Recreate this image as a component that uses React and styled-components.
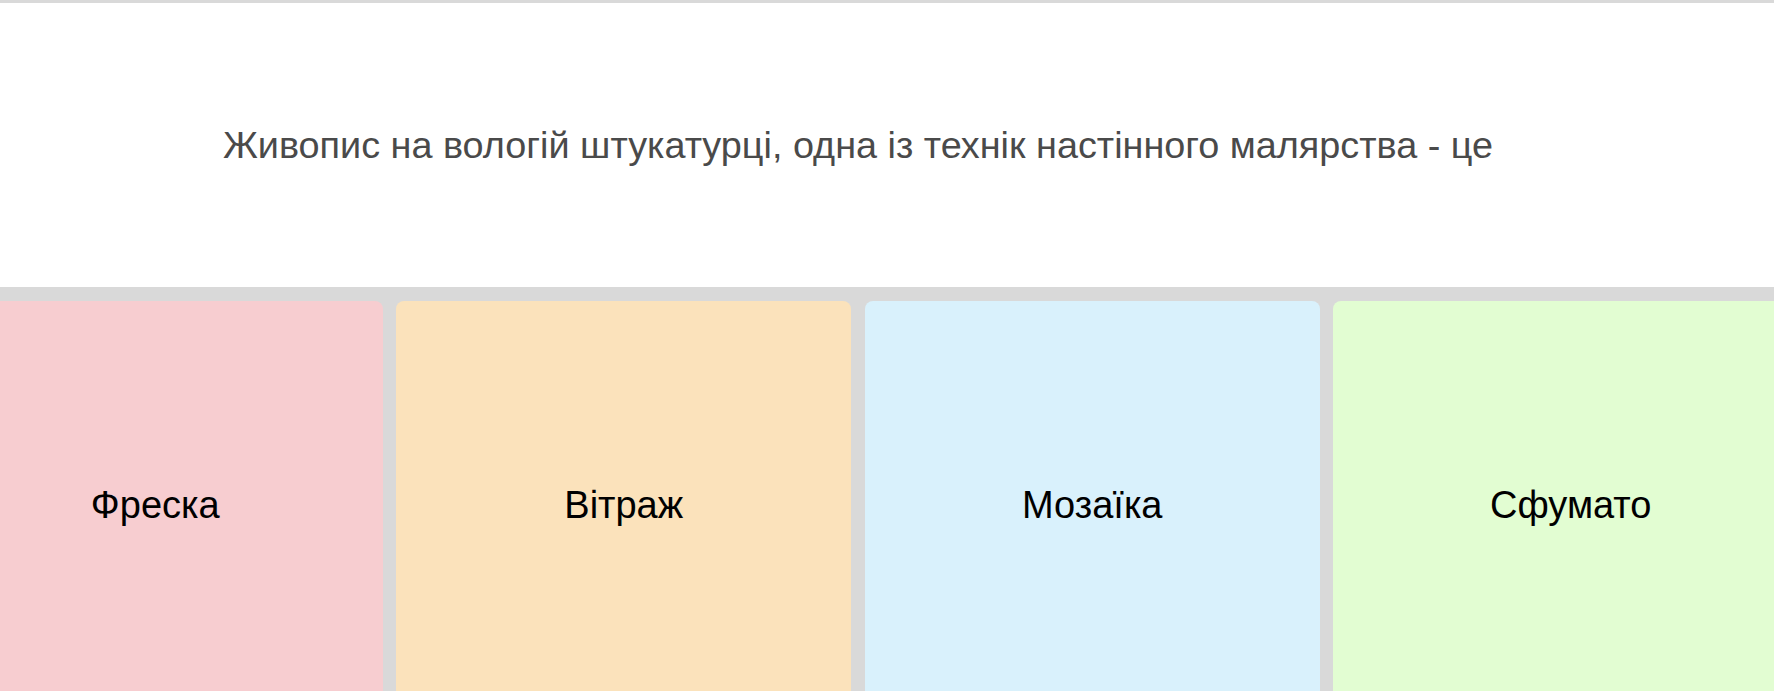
import React from "react";
import styled, { createGlobalStyle } from "styled-components";

const GlobalStyle = createGlobalStyle`
	html, body {
		margin: 0;
		padding: 0;
		overflow: hidden;
		background-color: #d9d9d9;
	}
	body {
		font-family: "Liberation Sans", Arial, sans-serif;
	}
`;

const Page = styled.div`
	display: flex;
	flex-direction: column;
	gap: 14px;
	height: 100vh;
	padding-top: 3px;
	box-sizing: border-box;
`;

const Question = styled.header`
	display: flex;
	align-items: center;
	justify-content: center;
	height: 284px;
	padding-right: 58px;
	background-color: #ffffff;
	flex-shrink: 0;
	h1 {
		margin: 0;
		font-weight: 400;
		font-size: 37.8px;
		color: #4a4a4a;
	}
`;

const Answers = styled.div`
	display: flex;
	justify-content: center;
	gap: 13.5px;
	width: calc(100% - 38px);
`;

const Answer = styled.div`
	display: flex;
	align-items: center;
	justify-content: center;
	flex: 0 0 ${(props) => props.$width}px;
	height: 409px;
	border-radius: 8px;
	background-color: ${(props) => props.$color};
	font-size: 38px;
	color: #000000;
	cursor: pointer;
`;

const answers = [
    { label: "Фреска", color: "#f7cdd0", width: 455 },
    { label: "Вітраж", color: "#fbe2bb", width: 455 },
    { label: "Мозаїка", color: "#d9f1fc", width: 455 },
    { label: "Сфумато", color: "#e2fdd2", width: 475 },
];

export default function App() {
    return (
        <>
            <GlobalStyle />
            <Page>
                <Question>
                    <h1>Живопис на вологій штукатурці, одна із технік настінного малярства - це</h1>
                </Question>
                <Answers>
                    {answers.map((a) => (
                        <Answer key={a.label} $color={a.color} $width={a.width}>
                            {a.label}
                        </Answer>
                    ))}
                </Answers>
            </Page>
        </>
    );
}
